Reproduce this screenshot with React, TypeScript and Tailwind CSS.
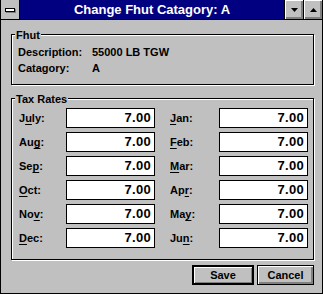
import React from 'react';

const font = { fontFamily: '"Liberation Sans", Arial, sans-serif' };

type Month = { pre: string; key: string; post: string };

const left: Month[] = [
  { pre: 'J', key: 'u', post: 'ly:' },
  { pre: 'Au', key: 'g', post: ':' },
  { pre: 'Se', key: 'p', post: ':' },
  { pre: '', key: 'O', post: 'ct:' },
  { pre: 'No', key: 'v', post: ':' },
  { pre: '', key: 'D', post: 'ec:' },
];

const right: Month[] = [
  { pre: '', key: 'J', post: 'an:' },
  { pre: '', key: 'F', post: 'eb:' },
  { pre: '', key: 'M', post: 'ar:' },
  { pre: 'Ap', key: 'r', post: ':' },
  { pre: 'Ma', key: 'y', post: ':' },
  { pre: 'Ju', key: 'n', post: ':' },
];

function Label({ m, w }: { m: Month; w: string }) {
  return (
    <span className={`${w} shrink-0`}>
      {m.pre}
      <span className="underline underline-offset-2">{m.key}</span>
      {m.post}
    </span>
  );
}

function Field() {
  return (
    <div className="w-[89px] h-[20px] bg-white border border-black flex items-center justify-end pr-[3px] shrink-0 text-[13px] tracking-[0.3px]">
      7.00
    </div>
  );
}

function CaptionButton({ up }: { up?: boolean }) {
  return (
    <div className="w-[19px] h-[19px] border-l border-black bg-[#c0c0c0] shadow-[inset_1px_1px_0_#fff,inset_-1px_-1px_0_#808080,inset_-2px_-2px_0_#808080] flex items-center justify-center">
      <svg width="7" height="4" viewBox="0 0 7 4">
        {up ? <polygon points="3.5,0 7,4 0,4" fill="#000" /> : <polygon points="0,0 7,0 3.5,4" fill="#000" />}
      </svg>
    </div>
  );
}

export default function App() {
  return (
    <div
      style={font}
      className="w-[323px] h-[294px] bg-[#c0c0c0] border-l border-r border-b border-black text-[11px] font-bold text-black leading-[16px] overflow-hidden"
    >
      {/* caption */}
      <div className="flex h-[20px] border-b border-black">
        <div className="w-[19px] h-[19px] bg-[#c0c0c0] border-r border-black flex items-center justify-center">
          <div className="w-[10px] h-[4px] bg-white border border-black shadow-[1px_1px_0_#808080]" />
        </div>
        <div className="flex-1 bg-[#000080] text-white text-[13px] flex items-center justify-center leading-none pb-[1px]">
          Change Fhut Catagory: A
        </div>
        <CaptionButton />
        <CaptionButton up />
      </div>

      {/* Fhut group */}
      <div className="relative mt-[14px] ml-[10px] w-[303px] h-[51px] border border-black shadow-[inset_1px_1px_0_#fff,1px_1px_0_#fff] pt-[9px] pl-[6px]">
        <span className="absolute -top-[8px] left-[3px] px-[1px] bg-[#c0c0c0]">Fhut</span>
        <div className="flex">
          <span className="w-[74px]">Description:</span>
          <span>55000 LB TGW</span>
        </div>
        <div className="flex">
          <span className="w-[74px]">Catagory:</span>
          <span>A</span>
        </div>
      </div>

      {/* Tax Rates group */}
      <div className="relative mt-[13px] ml-[10px] w-[303px] h-[162px] border border-black shadow-[inset_1px_1px_0_#fff,1px_1px_0_#fff] pt-[9px] pl-[7px]">
        <span className="absolute -top-[8px] left-[3px] px-[1px] bg-[#c0c0c0]">Tax Rates</span>
        <div className="flex flex-col gap-[4px]">
          {left.map((m, i) => (
            <div key={i} className="flex items-center h-[20px]">
              <Label m={m} w="w-[47px]" />
              <Field />
              <span className="w-[15px]" />
              <Label m={right[i]} w="w-[49px]" />
              <Field />
            </div>
          ))}
        </div>
      </div>

      {/* buttons */}
      <div className="flex justify-end gap-[3px] mt-[5px] pr-[8px]">
        <button className="w-[62px] h-[20px] bg-[#c0c0c0] border-2 border-black shadow-[inset_1px_1px_0_#fff,inset_-1px_-1px_0_#808080] flex items-center justify-center">
          Save
        </button>
        <button className="w-[57px] h-[20px] bg-[#c0c0c0] border border-black shadow-[inset_1px_1px_0_#fff,inset_-1px_-1px_0_#808080,inset_-2px_-2px_0_#808080] flex items-center justify-center">
          Cancel
        </button>
      </div>
    </div>
  );
}
